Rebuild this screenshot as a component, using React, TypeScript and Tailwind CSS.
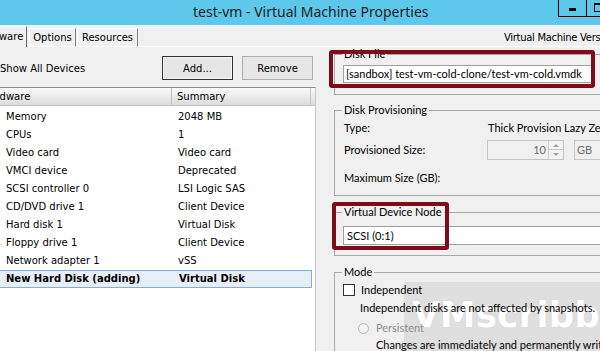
import React from "react";

const rows: [string, string][] = [
  ["Memory", "2048 MB"],
  ["CPUs", "1"],
  ["Video card", "Video card"],
  ["VMCI device", "Deprecated"],
  ["SCSI controller 0", "LSI Logic SAS"],
  ["CD/DVD drive 1", "Client Device"],
  ["Hard disk 1", "Virtual Disk"],
  ["Floppy drive 1", "Client Device"],
  ["Network adapter 1", "vSS"],
];

const tah = "font-['DejaVu_Sans',sans-serif] text-[10px]";
const seg = "font-['Lato',sans-serif] text-[11px]";

export default function App() {
  return (
    <div className="relative w-[600px] h-[351px] overflow-hidden bg-[#f0f0f0] text-black">
      {/* Watermark (behind the dialog content) */}
      <div className="absolute left-[404px] top-[282px] right-0 bottom-0 bg-black/[0.07] overflow-hidden">
        <div className="absolute left-[8px] top-[12px] font-['DejaVu_Sans',sans-serif] font-bold text-[36px] leading-[42px] text-white [text-shadow:0_0_1px_#bdbdbd] whitespace-nowrap">
          VMscribble
        </div>
      </div>

      <div className="relative">
        {/* Title bar */}
        <div className="flex h-[25px] bg-[#5ec8ea]">
          <div className="pl-[193px] pt-[2px] font-['Noto_Sans',sans-serif] text-[14px] leading-[20px] text-[#1c1c1c] whitespace-nowrap">
            test-vm - Virtual Machine Properties
          </div>
          <div className="ml-auto flex h-[17px] self-start">
            <div className="w-[29px] h-[17px] border-l border-r border-b border-black flex justify-center pt-[8px]">
              <div className="w-[7px] h-[3px] bg-black" />
            </div>
            <div className="w-[13px] h-[17px] border-b border-black pl-[7px] pt-[3px]">
              <div className="w-[10px] h-[9px] border border-t-2 border-black" />
            </div>
          </div>
        </div>

        {/* Tab strip */}
        <div className={`flex h-[22px] items-end ${tah}`}>
          <div className="shrink-0 -ml-[32px] w-[59px] h-[21px] border-t border-l border-white border-r border-r-[#696969] pl-[6px] leading-[20px] whitespace-nowrap">
            Hardware
          </div>
          <div className="shrink-0 ml-[2px] w-[47px] h-[19px] border-t border-l border-white border-r border-r-[#808080] border-b border-b-white text-center leading-[18px]">
            Options
          </div>
          <div className="shrink-0 ml-[1px] w-[61px] h-[19px] border-t border-l border-white border-r border-r-[#808080] border-b border-b-white text-center leading-[18px]">
            Resources
          </div>
          <div className="flex-1 min-w-0 h-[22px] border-b border-white pt-[6px] pl-[366px] leading-[13px] tracking-[-0.3px] whitespace-nowrap">
            Virtual Machine Version
          </div>
        </div>

        {/* Body */}
        <div className="flex">
          {/* Left column */}
          <div className="w-[316px] shrink-0 flex flex-col">
            <div className={`flex h-[40px] pt-[2px] items-center ${tah}`}>
              <div className="w-[162px] whitespace-nowrap">Show All Devices</div>
              <button className="w-[71px] h-[24px] border border-[#333] bg-[#e6e6e6] shadow-[inset_0_0_0_1px_#f4f4f4]">
                Add...
              </button>
              <button className="ml-[9px] w-[71px] h-[24px] border border-[#adadad] bg-[#e6e6e6]">
                Remove
              </button>
            </div>
            <div className={`h-[264px] border-t border-[#8a8a8a] border-r border-r-[#c8c8c8] bg-white ${tah}`}>
              <div className="flex h-[18px] bg-gradient-to-b from-[#fbfbfb] to-[#dcdcdc] border-b border-[#c5c5c5] leading-[17px]">
                <div className="shrink-0 w-[190px] -ml-[18px] border-r border-[#c0c0c0] whitespace-nowrap">
                  Hardware
                </div>
                <div className="shrink-0 w-[139px] pl-[5px] border-r border-[#c0c0c0]">Summary</div>
                <div className="flex-1" />
              </div>
              <div className="pt-[2px]">
                {rows.map(([a, b]) => (
                  <div key={a} className="flex h-[18px] leading-[18px]">
                    <div className="w-[178px] pl-[6px] whitespace-nowrap">{a}</div>
                    <div className="whitespace-nowrap">{b}</div>
                  </div>
                ))}
                <div className="flex h-[18px] leading-[16px] -ml-[1px] w-[313px] border border-[#84acd6] bg-[#e6eef8] font-bold">
                  <div className="w-[179px] pl-[6px] whitespace-nowrap">New Hard Disk (adding)</div>
                  <div className="whitespace-nowrap">Virtual Disk</div>
                </div>
              </div>
            </div>
          </div>

          {/* Right column */}
          <div className={`pl-[18px] flex flex-col ${seg}`}>
            <fieldset className="w-[280px] h-[48px] border border-[#a8a8a8]">
              <legend className="ml-[7px] px-[2px] leading-[14px]">Disk File</legend>
              <div className="mt-[4px] ml-[8px] w-[249px] h-[18px] border border-[#a0a0a0] bg-white pl-[2px] leading-[16px] whitespace-nowrap overflow-hidden">
                [sandbox] test-vm-cold-clone/test-vm-cold.vmdk
              </div>
            </fieldset>

            <fieldset className="mt-[8px] w-[280px] h-[93px] border border-[#a8a8a8]">
              <legend className="ml-[7px] px-[2px] leading-[14px]">Disk Provisioning</legend>
              <div className="mt-[2px] pl-[9px] flex h-[18px] items-center whitespace-nowrap">
                <div className="w-[144px]">Type:</div>
                <div>Thick Provision Lazy Zeroed</div>
              </div>
              <div className="mt-[3px] pl-[9px] flex h-[20px] items-center whitespace-nowrap">
                <div className="w-[143px]">Provisioned Size:</div>
                <div className="flex w-[77px] h-[20px] border border-[#c4c4c4] bg-[#f0f0f0]">
                  <div className="flex-1 text-right pr-[2px] text-[#6d6d6d] leading-[18px]">10</div>
                  <div className="w-[15px] flex flex-col border-l border-[#d0d0d0]">
                    <div className="h-[9px] border-b border-[#c8c8c8] bg-[#f4f4f4] flex items-center justify-center">
                      <div className="w-0 h-0 border-l-[3px] border-r-[3px] border-b-[3px] border-l-transparent border-r-transparent border-b-[#a0a0a0]" />
                    </div>
                    <div className="flex-1 bg-[#f4f4f4] flex items-center justify-center">
                      <div className="w-0 h-0 border-l-[3px] border-r-[3px] border-t-[3px] border-l-transparent border-r-transparent border-t-[#a0a0a0]" />
                    </div>
                  </div>
                </div>
                <div className="ml-[10px] w-[40px] h-[20px] border border-[#c4c4c4] bg-[#f0f0f0] pl-[2px] text-[#6d6d6d] leading-[18px]">
                  GB
                </div>
              </div>
              <div className="mt-[9px] pl-[9px] flex h-[18px] items-center whitespace-nowrap">
                Maximum Size (GB):
              </div>
            </fieldset>

            <fieldset className="mt-[9px] w-[280px] h-[51px] border border-[#a8a8a8]">
              <legend className="ml-[7px] px-[2px] leading-[14px]">Virtual Device Node</legend>
              <div className="mt-[7px] ml-[8px] w-[270px] h-[19px] border border-[#a0a0a0] bg-white pl-[3px] leading-[17px] whitespace-nowrap">
                SCSI (0:1)
              </div>
            </fieldset>

            <fieldset className="mt-[9px] w-[280px] h-[100px] border border-[#a8a8a8]">
              <legend className="ml-[7px] px-[2px] leading-[14px]">Mode</legend>
              <div className="mt-[3px] ml-[8px] flex h-[16px] items-center whitespace-nowrap">
                <div className="w-[12px] h-[12px] border border-[#333] bg-white" />
                <div className="ml-[6px]">Independent</div>
              </div>
              <div className="mt-[2px] ml-[25px] h-[16px] leading-[16px] whitespace-nowrap">
                Independent disks are not affected by snapshots.
              </div>
              <div className="mt-[4px] ml-[23px] flex h-[16px] items-center whitespace-nowrap text-[#8d8d8d]">
                <div className="w-[11px] h-[11px] rounded-full border border-[#bdbdbd] bg-[#f4f4f4]" />
                <div className="ml-[7px]">Persistent</div>
              </div>
              <div className="mt-[1px] ml-[41px] h-[16px] leading-[16px] whitespace-nowrap">
                Changes are immediately and permanently written to the disk.
              </div>
            </fieldset>
          </div>
        </div>
      </div>

      {/* Red highlight boxes */}
      <div className="absolute left-[329px] top-[50px] w-[266px] h-[38px] border-4 border-[#7e0a1c] rounded-[3px]" />
      <div className="absolute left-[332px] top-[202px] w-[117px] h-[48px] border-4 border-[#7e0a1c] rounded-[3px]" />
    </div>
  );
}
